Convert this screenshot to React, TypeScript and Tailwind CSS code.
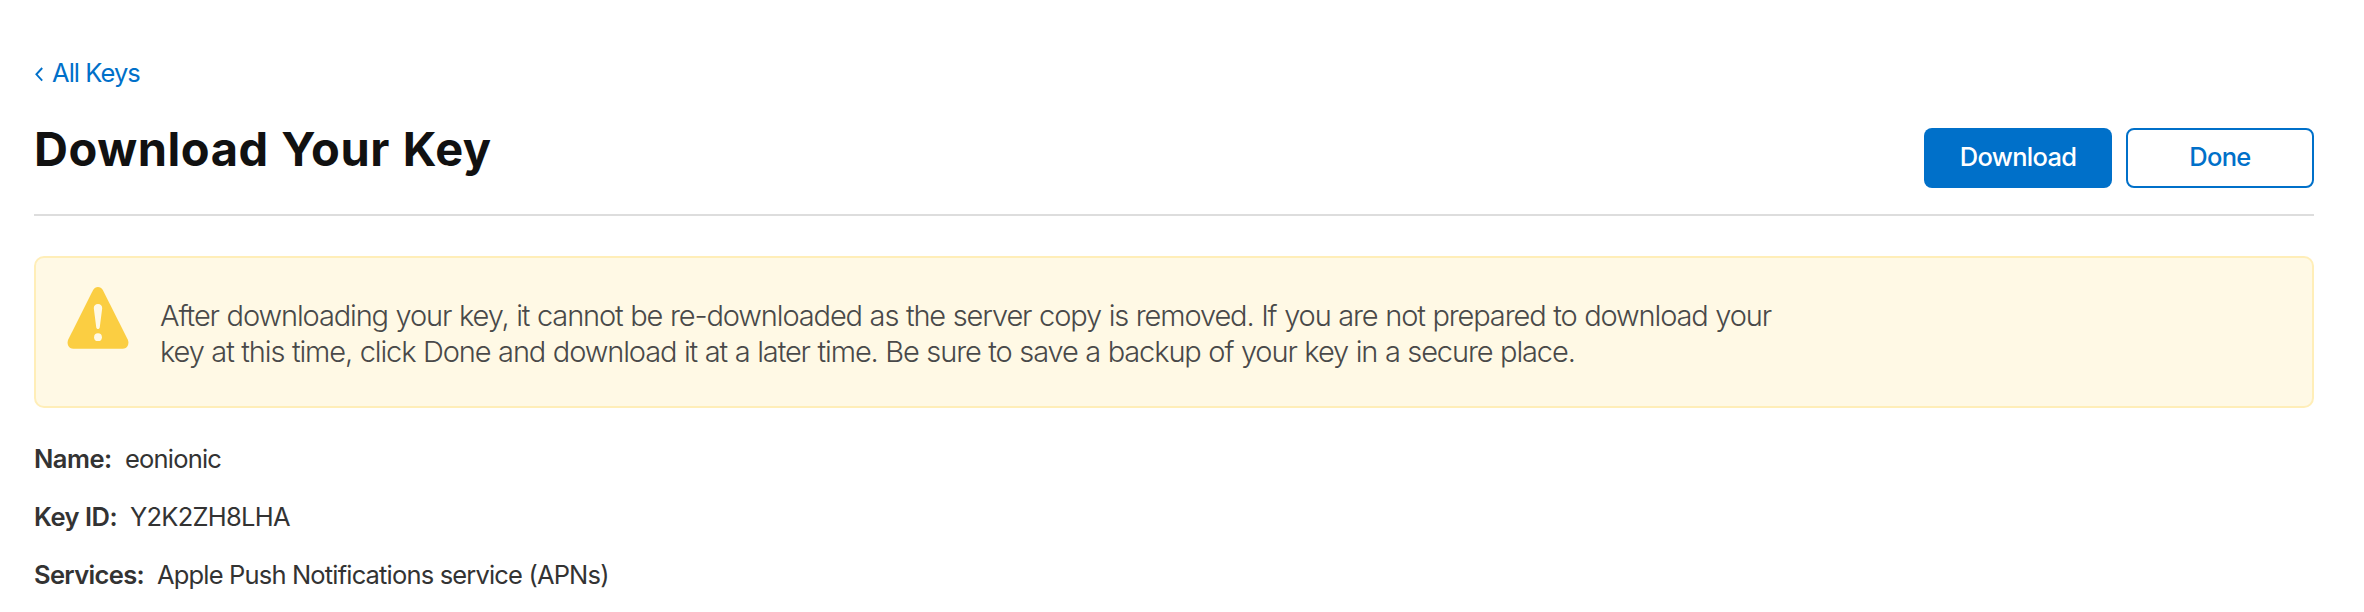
const details = [
  { label: "Name:", value: "eonionic", labelClass: "w-[91px] tracking-[-0.5px]", valueClass: "tracking-[-0.8px]" },
  { label: "Key ID:", value: "Y2K2ZH8LHA", labelClass: "w-[96px] tracking-[-0.5px]", valueClass: "tracking-[-0.75px]" },
  { label: "Services:", value: "Apple Push Notifications service (APNs)", labelClass: "w-[123px] tracking-[-0.65px]", valueClass: "tracking-[-0.83px]" },
];

function WarningIcon() {
  return (
    <svg className="mt-[28px] ml-[30px] h-[64px] w-[64px] shrink-0" viewBox="0 0 64 64" aria-hidden="true">
      <path
        d="M27.1 4.1C29.2 0 34.7 0 36.8 4.1L61.6 53.2C63.8 57.6 61.4 62.7 56.6 62.7H7.4C2.6 62.7 0.2 57.6 2.4 53.2Z"
        fill="#fbce42"
      />
      <path d="M32 18C34.6 18 36.3 19.8 36.2 22.3L33.8 41C33.5 43.7 30.5 43.7 30.2 41L27.8 22.3C27.7 19.8 29.4 18 32 18Z" fill="#fff9e5" />
      <circle cx="32" cy="51.2" r="3.9" fill="#fff9e5" />
    </svg>
  );
}

export default function App() {
  return (
    <main className="h-[612px] overflow-hidden bg-white pr-[50px] pl-[34px] pt-[54px] font-['Inter',sans-serif] text-[#333]">
      <a className="flex h-[38px] w-fit items-center whitespace-nowrap text-[25.5px] leading-[38px] tracking-[-0.95px] text-[#0070c9]">
        <svg className="mt-[3px] mr-[9px] ml-px h-[15px] w-[8px]" viewBox="0 0 8 15" fill="none" aria-hidden="true">
          <path d="M7.2 1L1.4 7.3L7.2 13.6" stroke="currentColor" strokeWidth="1.9" />
        </svg>
        All Keys
      </a>
      <header className="flex h-[124px] justify-between border-b-2 border-[#ddd]">
        <h1 className="mt-[29px] whitespace-nowrap text-[47px] leading-[56px] font-bold tracking-[0.55px] [word-spacing:1px] text-[#111]">
          Download Your Key
        </h1>
        <div className="mt-[36px] flex h-[60px] gap-[14px] text-[25.5px] font-medium tracking-[-0.7px]">
          <button className="w-[188px] rounded-lg bg-[#0070c9] pb-[2px] text-white">Download</button>
          <button className="w-[188px] rounded-lg border-2 border-[#0070c9] bg-white pb-[2px] text-[#0070c9]">Done</button>
        </div>
      </header>
      <section className="mt-[40px] flex h-[152px] rounded-[10px] border-2 border-[#ffeeb8] bg-[#fff9e5]">
        <WarningIcon />
        <p className="mt-[40px] ml-[30px] text-[29px] leading-[36px] font-light tracking-[-1.12px] [word-spacing:0.6px] whitespace-nowrap text-[#494949]">
          After downloading your key, it cannot be re-downloaded as the server copy is removed. If you are not prepared to download your
          <br />
          key at this time, click Done and download it at a later time. Be sure to save a backup of your key in a secure place.
        </p>
      </section>
      <dl className="mt-[31px] text-[25.5px] leading-[40px]">
        {details.map((d) => (
          <div key={d.label} className="mb-[18px] flex whitespace-nowrap">
            <dt className={"font-semibold " + d.labelClass}>{d.label}</dt>
            <dd className={d.valueClass}>{d.value}</dd>
          </div>
        ))}
      </dl>
    </main>
  );
}
